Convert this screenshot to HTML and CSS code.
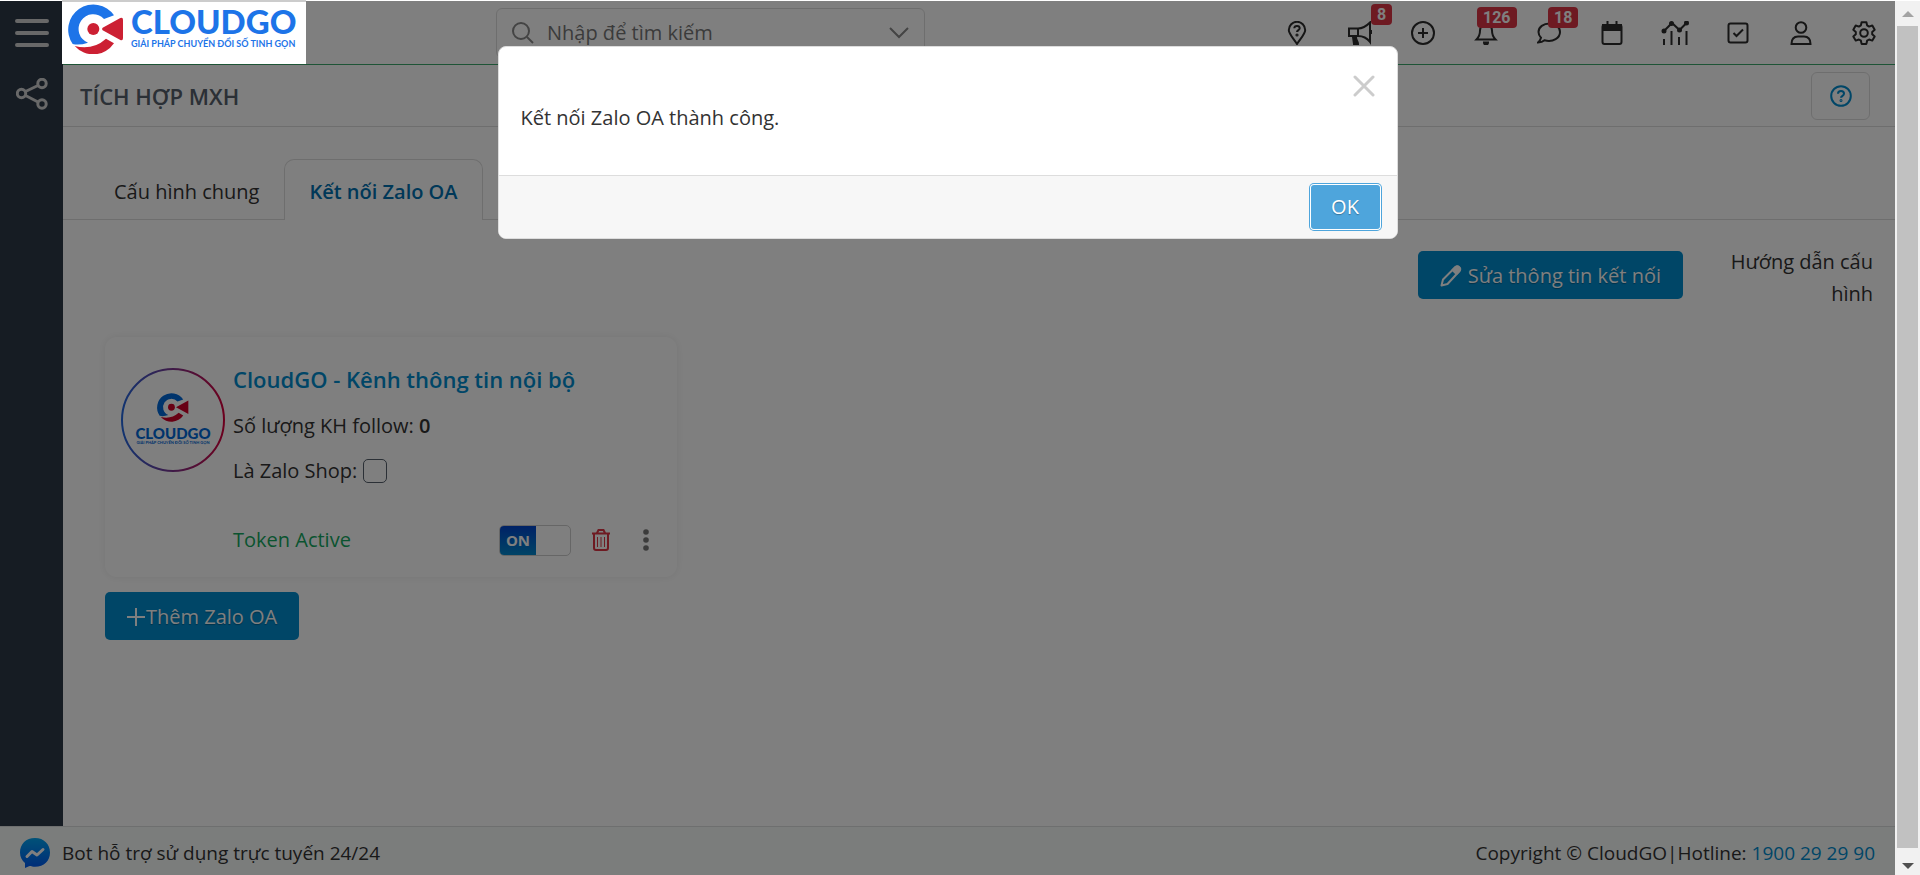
FILE: index.html
```html
<!DOCTYPE html>
<html lang="vi">
<head>
    <meta charset="UTF-8">
    <meta name="viewport" content="width=device-width, initial-scale=1.0">
    <title>Tích hợp MXH</title>
    <link rel="stylesheet" href="styles.css">
</head>
<body>
    <div class="app">
        <div class="workspace">
            <nav class="sidebar">
                <button type="button" class="side-btn" aria-label="Menu">
                    <svg width="34" height="28" viewBox="0 0 34 28" fill="none" stroke="currentColor" stroke-width="4" stroke-linecap="round"><path d="M2 2h30M2 14h30M2 26h30"/></svg>
                </button>
                <button type="button" class="side-btn" aria-label="Mạng xã hội">
                    <svg width="32" height="32" viewBox="0 0 32 32" fill="none" stroke="currentColor" stroke-width="3"><circle cx="5.500" cy="15.500" r="4.200"/><circle cx="26" cy="5.500" r="4.200"/><circle cx="26" cy="26" r="4.200"/><path d="M9.500 13.500l12.500-6M9.500 17.500l12.500 6.500"/></svg>
                </button>
            </nav>

            <div class="main">
                <header class="topbar">
                    <a href="#" class="logo">
                        <svg width="55" height="50" viewBox="0 0 165 150">
                            <path fill="#1d74e8" d="M138 34A75 75 0 1 0 14 120Q34 125 60 116A44 44 0 1 1 108 45Z"/>
                            <path fill="#cc2033" d="M20 126Q74 140 114 104L138 118A75 75 0 0 1 20 126Z"/>
                            <circle cx="76" cy="75" r="18" fill="#cc2033"/>
                            <path fill="#cc2033" d="M104 71L157 42Q165 39 165 48V102Q165 111 157 108L104 79Q100 75 104 71Z"/>
                        </svg>
                        <span class="logo-text">
                            <span class="logo-name">CLOUDGO</span>
                            <span class="logo-slogan">GIẢI PHÁP CHUYỂN ĐỔI SỐ TINH GỌN</span>
                        </span>
                    </a>

                    <form class="search">
                        <svg width="22" height="22" viewBox="0 0 22 22" fill="none" stroke="currentColor" stroke-width="2"><circle cx="9" cy="9" r="8"/><path d="M15 15l6 6"/></svg>
                        <input type="text" placeholder="Nhập để tìm kiếm" aria-label="Tìm kiếm">
                        <svg width="20" height="12" viewBox="0 0 20 12" fill="none" stroke="currentColor" stroke-width="2"><path d="M1 1l9 9 9-9"/></svg>
                    </form>

                    <div class="tools">
                        <button type="button" class="tool" aria-label="Check-in">
                            <svg width="24" height="24" viewBox="0 0 24 24"><path d="M12 23C9 18 3.800 13 3.800 9a8.200 8.200 0 0 1 16.400 0c0 4-5.200 9-8.200 14z"/><path d="M9.300 7.300c0-3.200 5.400-3.200 5.400 0 0 1.800-2.700 1.800-2.700 3.800"/><circle class="fill" cx="12" cy="14" r=".6"/></svg>
                        </button>
                        <button type="button" class="tool" aria-label="Tin tức">
                            <svg width="24" height="24" viewBox="0 0 24 24"><path d="M1 7.500h9c5 0 9-3 12-6v19.500c-3-4-7-6-12-6H1zM10 8v7"/><path class="fill" d="M5 16h3c0 4 2 4 2 7H6z"/><path d="M23 9v4"/></svg>
                            <span class="badge badge-news">8</span>
                        </button>
                        <button type="button" class="tool" aria-label="Thêm nhanh">
                            <svg width="24" height="24" viewBox="0 0 24 24"><circle cx="12" cy="12" r="11"/><path d="M12 7v10M7 12h10"/></svg>
                        </button>
                        <button type="button" class="tool" aria-label="Thông báo">
                            <svg width="24" height="24" viewBox="0 0 24 24"><path d="M12 1v2M2.500 18.500c2-2 3.500-4 3.500-9a6 6 0 0 1 12 0c0 5 1.500 7 3.500 9z"/><path class="fill" d="M10 21.500h4a2 2 0 0 1-4 0z"/></svg>
                            <span class="badge badge-bell">126</span>
                        </button>
                        <button type="button" class="tool" aria-label="Tin nhắn">
                            <svg width="24" height="24" viewBox="0 0 24 24"><path d="M12.500 2.500C6.500 2.500 1.500 6 1.500 11c0 2.500 1 4.200 2.500 5.800-.5 2-1.500 3.500-3 4.700 2.800 0 5-.8 6.500-2.200 9 2.200 15.500-2.500 15.500-8.300 0-5-4.500-8.500-10.500-8.500z"/></svg>
                            <span class="badge badge-chat">18</span>
                        </button>
                        <button type="button" class="tool" aria-label="Lịch">
                            <svg width="24" height="24" viewBox="0 0 24 24"><rect x="2.500" y="4" width="19" height="19" rx="2"/><path class="fill" d="M3 4h18v5H3z"/><path d="M7.500 0v4M16.500 0v4"/></svg>
                        </button>
                        <button type="button" class="tool" aria-label="Báo cáo">
                            <svg width="28" height="24" viewBox="0 0 28 24"><path d="M3 10l8-8 7.500 7 7-7M3 18v6M10.500 10v14M18 16v8M25.500 10v14"/><circle class="fill" cx="3" cy="10" r="1.500"/><circle class="fill" cx="10.500" cy="2.500" r="1.500"/><circle class="fill" cx="18.500" cy="9" r="1.500"/><circle class="fill" cx="25.500" cy="2" r="1.500"/></svg>
                        </button>
                        <button type="button" class="tool" aria-label="Công việc">
                            <svg width="24" height="24" viewBox="0 0 24 24"><rect x="2.500" y="2.500" width="19" height="19" rx="2"/><path d="M7.500 12l3 3 6.500-6.500"/></svg>
                        </button>
                        <button type="button" class="tool" aria-label="Tài khoản">
                            <svg width="24" height="24" viewBox="0 0 24 24"><circle cx="12" cy="6.500" r="5.300"/><path d="M2.500 23c0-5 2.500-7.500 6.500-7.500h6c4 0 6.500 2.500 6.500 7.500z"/></svg>
                        </button>
                        <button type="button" class="tool" aria-label="Cài đặt">
                            <svg width="24" height="24" viewBox="0 0 24 24"><path d="M9.600 1.200h4.800l.7 3.200 2 1.200 3.200-1.100 2.400 4.200-2.500 2.200v2.300l2.500 2.200-2.400 4.200-3.200-1.100-2 1.200-.7 3.200H9.600l-.7-3.200-2-1.200-3.200 1.100-2.400-4.200 2.500-2.200v-2.300L1.300 8.700l2.400-4.200 3.200 1.100 2-1.200z" stroke-linejoin="round"/><circle cx="12" cy="12" r="3.800"/></svg>
                        </button>
                    </div>
                </header>

                <div class="titlebar">
                    <h1>TÍCH HỢP MXH</h1>
                    <button type="button" class="help-btn" aria-label="Trợ giúp">
                        <svg width="22" height="22" viewBox="0 0 22 22" fill="none" stroke="currentColor" stroke-width="2"><circle cx="11" cy="11" r="9.800"/><path d="M8 8.800c0-3.600 6-3.600 6 0 0 2-3 2-3 4"/><circle cx="11" cy="15.500" r=".5"/></svg>
                    </button>
                </div>

                <div class="tabs">
                    <a href="#" class="tab">Cấu hình chung</a>
                    <a href="#" class="tab active">Kết nối Zalo OA</a>
                </div>

                <div class="content">
                    <div class="actions">
                        <button type="button" class="btn">
                            <svg width="22" height="22" viewBox="0 0 22 22" fill="none" stroke="currentColor" stroke-width="2" stroke-linejoin="round"><path d="M1.500 20.500l1.500-6L15 2.500q2-2 4 0t0 4L7.500 19z"/><path fill="currentColor" d="M12.500 5l3-3q2-1.500 3.800.2t.2 3.800l-3 3z"/></svg>
                            Sửa thông tin kết nối
                        </button>
                        <a href="#" class="guide">Hướng dẫn cấu hình</a>
                    </div>

                    <div class="card">
                        <svg class="avatar" width="104" height="104" viewBox="0 0 104 104">
                            <defs>
                                <linearGradient id="ring"><stop offset="0" stop-color="#2468e0"/><stop offset="1" stop-color="#d8003c"/></linearGradient>
                            </defs>
                            <circle cx="52" cy="52" r="51" fill="#fff" stroke="url(#ring)" stroke-width="2"/>
                            <g transform="translate(36 25) scale(.19)">
                                <path fill="#0068d8" d="M138 34A75 75 0 1 0 14 120Q34 125 60 116A44 44 0 1 1 108 45Z"/>
                                <path fill="#d00028" d="M20 126Q74 140 114 104L138 118A75 75 0 0 1 20 126ZM100 75L165 39V111Z"/>
                                <circle cx="76" cy="75" r="18" fill="#d00028"/>
                            </g>
                            <text class="avatar-name" x="52" y="71" text-anchor="middle">CLOUDGO</text>
                            <text class="avatar-slogan" x="52" y="76" text-anchor="middle">GIẢI PHÁP CHUYỂN ĐỔI SỐ TINH GỌN</text>
                        </svg>
                        <div class="card-info">
                            <h2><a href="#">CloudGO - Kênh thông tin nội bộ</a></h2>
                            <p>Số lượng KH follow: <b>0</b></p>
                            <p class="shop"><label for="zaloShop">Là Zalo Shop:</label><input type="checkbox" id="zaloShop"></p>
                            <div class="card-footer">
                                <span class="token">Token Active</span>
                                <button type="button" class="switch" role="switch" aria-checked="true"><span>ON</span></button>
                                <button type="button" class="delete" aria-label="Xóa">
                                    <svg width="20" height="22" viewBox="0 0 20 22" fill="none" stroke="currentColor" stroke-width="2"><path d="M1 4.500h18M3 5v14q0 2 2 2h10q2 0 2-2V5M6 4l1.500-3h5L14 4"/><path stroke-width="1" d="M6.500 8v10M10 8v10M13.500 8v10"/></svg>
                                </button>
                                <button type="button" class="more" aria-label="Thêm">
                                    <svg width="6" height="22" viewBox="0 0 6 22" fill="currentColor"><circle cx="3" cy="3" r="2.800"/><circle cx="3" cy="11" r="2.800"/><circle cx="3" cy="19" r="2.800"/></svg>
                                </button>
                            </div>
                        </div>
                    </div>

                    <button type="button" class="btn add-btn">
                        <svg width="18" height="18" viewBox="0 0 18 18" fill="none" stroke="currentColor" stroke-width="2"><path d="M9 0v18M0 9h18"/></svg>Thêm Zalo OA
                    </button>
                </div>
            </div>
        </div>

        <footer class="footer">
            <svg width="30" height="30" viewBox="0 0 30 30">
                <defs>
                    <linearGradient id="bot" x2="0" y2="1"><stop offset="0" stop-color="#00a4f0"/><stop offset="1" stop-color="#0058f0"/></linearGradient>
                </defs>
                <path fill="url(#bot)" d="M15 0C6 0 0 6 0 14.500c0 4.500 2 8 5 10.500v5l4.500-2c2 .6 3.500.8 5.500.8 9 0 15-6 15-14.300S24 0 15 0z"/>
                <path fill="none" stroke="#fff" stroke-width="3" stroke-linecap="round" stroke-linejoin="round" d="M7 18.500l5-5 5 3.500 6-5.500"/>
            </svg>
            <span>Bot hỗ trợ sử dụng trực tuyến 24/24</span>
            <span class="copyright">Copyright © CloudGO|Hotline: <a href="#">1900 29 29 90</a></span>
        </footer>

        <div class="overlay">
            <div class="modal" role="dialog" aria-modal="true" aria-labelledby="modalText">
                <div class="modal-body">
                    <button type="button" class="close" aria-label="Đóng">
                        <svg width="22" height="22" viewBox="0 0 22 22" fill="none" stroke="currentColor" stroke-width="3" stroke-linecap="round"><path d="M2 2l18 18M20 2L2 20"/></svg>
                    </button>
                    <p id="modalText">Kết nối Zalo OA thành công.</p>
                </div>
                <div class="modal-footer">
                    <button type="button" class="ok-btn">OK</button>
                </div>
            </div>
        </div>
    </div>

    <div class="scrollbar">
        <span class="arrow up"></span>
        <span class="thumb"></span>
        <span class="arrow down"></span>
    </div>
</body>
</html>
```
FILE: styles.css
```css
* {
    box-sizing: border-box;
}
body {
    margin: 0;
    padding-top: 1px;
    display: flex;
    height: 100vh;
    background: #fff;
    color: #333;
    font-family: "Open Sans", "Noto Sans", sans-serif;
    font-size: 20px;
    line-height: 32px;
}
button, input {
    font: inherit;
    color: inherit;
}
button {
    padding: 0;
    border: 0;
    background: none;
    cursor: pointer;
}
a {
    color: #008ccf;
    text-decoration: none;
}
h1, h2, p {
    margin: 0;
}
svg {
    display: block;
    flex: none;
}

.app {
    position: relative;
    flex: 1;
    min-width: 0;
    display: flex;
    flex-direction: column;
}
.workspace {
    flex: 1;
    display: flex;
}
.main {
    flex: 1;
    min-width: 0;
}

/* sidebar */
.sidebar {
    width: 63px;
    padding-top: 18px;
    display: flex;
    flex-direction: column;
    align-items: center;
    gap: 31px;
    background: #2c3846;
    color: #d0d0d0;
}

/* top bar */
.topbar {
    display: flex;
    align-items: center;
    height: 64px;
    border-bottom: 1px solid #3ca86c;
}
.logo {
    position: relative;
    z-index: 20;
    display: flex;
    gap: 8px;
    width: 244px;
    height: 64px;
    margin: -1px 0 0 -1px;
    padding: 2px 0 0 6px;
    border-top: 2px solid #ccc;
    background: #fff;
    color: #1d74e8;
    font-family: Lato, sans-serif;
}
.logo-text {
    display: flex;
    flex-direction: column;
}
.logo-name {
    font-size: 33px;
    font-weight: 900;
    line-height: 34px;
}
.logo-slogan {
    font-size: 9px;
    font-weight: 700;
    line-height: 12px;
    white-space: nowrap;
}
.search {
    display: flex;
    align-items: center;
    width: 429px;
    height: 50px;
    margin-left: 190px;
    padding: 0 15px;
    border: 1px solid #ddd;
    border-radius: 6px;
    color: #888;
}
.search input {
    flex: 1;
    min-width: 0;
    padding: 0 13px;
    border: 0;
    outline: 0;
    background: none;
}
.search input::placeholder {
    color: #777;
    opacity: 1;
}
.tools {
    display: flex;
    margin-left: auto;
    color: #2c2c2c;
}
.tool {
    position: relative;
    display: flex;
    align-items: center;
    justify-content: center;
    width: 63px;
    height: 63px;
}
.tool svg {
    fill: none;
    stroke: currentColor;
    stroke-width: 2;
}
.tool .fill {
    fill: currentColor;
}
.badge {
    position: absolute;
    padding: 0 6px;
    border-radius: 4px;
    background: #dc3545;
    color: #fff;
    font-family: Roboto, sans-serif;
    font-size: 16px;
    font-weight: 700;
    line-height: 21px;
}
.badge-news {
    top: 3px;
    left: 43px;
}
.badge-bell {
    top: 6px;
    left: 23px;
}
.badge-chat {
    top: 6px;
    left: 31px;
}

/* page title */
.titlebar {
    display: flex;
    align-items: center;
    justify-content: space-between;
    height: 62px;
    padding: 0 25px 0 17px;
    border-bottom: 1px solid #ddd;
}
.titlebar h1 {
    color: #56606c;
    font-size: 22px;
    font-weight: 600;
}
.help-btn {
    display: flex;
    align-items: center;
    justify-content: center;
    width: 59px;
    height: 48px;
    border: 1px solid #ddd;
    border-radius: 6px;
    color: #008ccf;
}

.tabs {
    display: flex;
    margin-top: 32px;
    padding-left: 26px;
    border-bottom: 1px solid #ddd;
}
.tab {
    height: 60px;
    padding: 16px 24px 12px;
    border: 1px solid transparent;
    border-bottom: 0;
    color: #333;
}
.tab.active {
    height: 61px;
    margin-bottom: -1px;
    border-color: #ddd;
    border-radius: 10px 10px 0 0;
    background: #fff;
    color: #0070b0;
    font-weight: 600;
}

/* content */
.content {
    padding: 26px 22px 0 42px;
}
.actions {
    display: flex;
    justify-content: flex-end;
    gap: 38px;
    margin-bottom: 27px;
}
.btn {
    display: flex;
    align-items: center;
    gap: 6px;
    height: 48px;
    margin-top: 5px;
    padding: 1px 22px 0;
    border-radius: 5px;
    background: #008ccf;
    color: #fff;
    text-shadow: 0 1px 1px rgba(0, 0, 0, 0.3);
}
.guide {
    width: 152px;
    color: #333;
    text-align: right;
}
.card {
    display: flex;
    gap: 8px;
    max-width: 572px;
    height: 240px;
    padding: 25px 24px 21px 16px;
    border-radius: 12px;
    box-shadow: 0 0 8px rgba(0, 0, 0, 0.08);
}
.avatar {
    margin-top: 6px;
}
.avatar-name {
    fill: #0068d8;
    font: 900 15px Lato, sans-serif;
}
.avatar-slogan {
    fill: #0068d8;
    font: 700 4px Lato, sans-serif;
}
.card-info {
    flex: 1;
    display: flex;
    flex-direction: column;
    gap: 14px;
}
.card-info h2 {
    font-size: 22px;
    font-weight: 600;
    line-height: 34px;
}
.card-info p {
    line-height: 31px;
}
.card-info b {
    font-weight: 600;
}
.shop {
    display: flex;
    align-items: center;
    gap: 6px;
}
.shop input {
    appearance: none;
    width: 24px;
    height: 24px;
    margin: 0;
    border: 1px solid #56606c;
    border-radius: 5px;
}
.card-footer {
    display: flex;
    align-items: center;
    margin-top: auto;
}
.token {
    margin-right: auto;
    color: #14a860;
}
.switch {
    display: flex;
    width: 72px;
    height: 31px;
    border: 1px solid #ccc;
    border-radius: 5px;
    overflow: hidden;
}
.switch span {
    width: 36px;
    background: linear-gradient(#0044cc, #0088cc);
    color: #fff;
    font-size: 15px;
    font-weight: 700;
    line-height: 29px;
}
.delete {
    margin: 0 32px 0 20px;
    color: #dc3545;
}
.more {
    margin-right: 4px;
    color: #777;
}
.add-btn {
    gap: 1px;
    margin-top: 15px;
}

.footer {
    display: flex;
    align-items: center;
    gap: 12px;
    height: 49px;
    padding: 4px 20px 0;
    border-top: 1px solid #dcdede;
    background: #f7faf9;
    font-size: 19px;
}
.copyright {
    margin-left: auto;
}

/* message box */
.overlay {
    position: absolute;
    inset: 0;
    z-index: 10;
    padding-top: 45px;
    background: rgba(0, 0, 0, 0.5);
}
.modal {
    max-width: 900px;
    margin: 0 auto;
    border: 1px solid #ddd;
    border-radius: 8px;
    background: #fff;
    overflow: hidden;
}
.modal-body {
    position: relative;
    padding: 55px 22px 41px;
}
.close {
    position: absolute;
    top: 28px;
    right: 22px;
    color: #ccc;
}
.modal-footer {
    display: flex;
    justify-content: flex-end;
    padding: 9px 17px;
    border-top: 1px solid #ddd;
    background: #f7f7f7;
}
.ok-btn {
    height: 44px;
    width: 69px;
    border-radius: 3px;
    background: #4ea5dc;
    box-shadow: 0 0 0 1px #fff, 0 0 0 2px #4ea5dc;
    color: #fff;
    text-shadow: 0 1px 1px rgba(0, 0, 0, 0.3);
}

.scrollbar {
    display: flex;
    flex-direction: column;
    align-items: center;
    width: 25px;
    padding: 10px 2px 6px;
    background: #f1f1f1;
}
.arrow {
    border: 6px solid transparent;
}
.up {
    border-top: 0;
    border-bottom-color: #a3a3a3;
}
.down {
    border-bottom: 0;
    border-top-color: #505050;
}
.thumb {
    flex: 1;
    width: 21px;
    margin: 9px 0 15px;
    background: #c1c1c1;
}
```
